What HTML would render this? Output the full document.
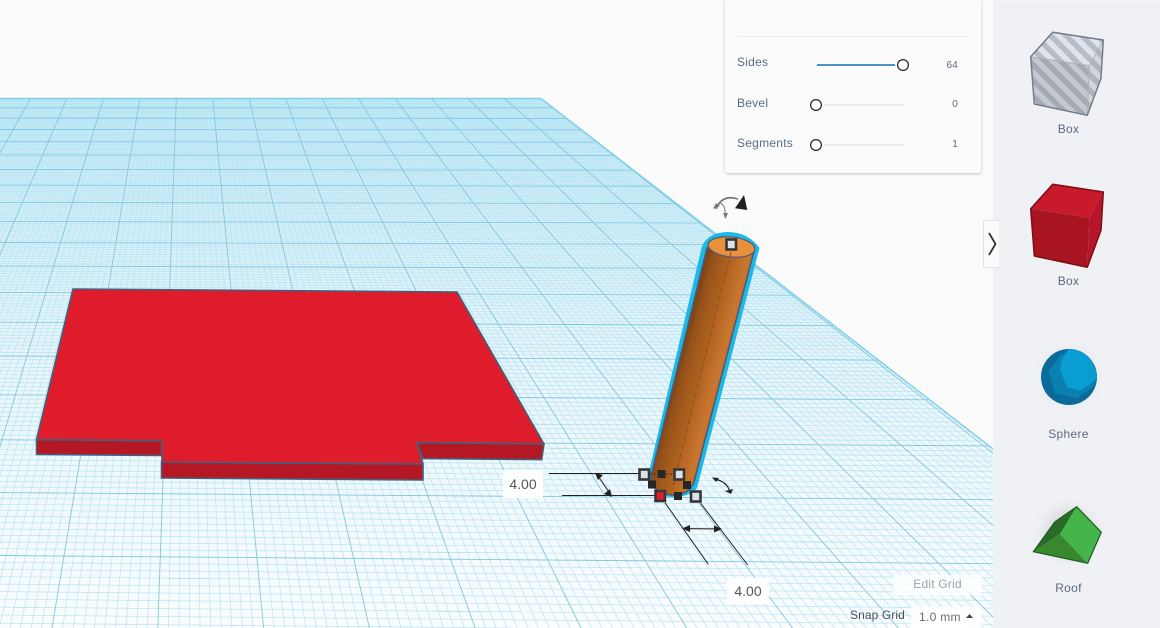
<!DOCTYPE html>
<html>
<head>
<meta charset="utf-8">
<title>Workplane</title>
<style>
html,body{margin:0;padding:0;width:1160px;height:628px;overflow:hidden;background:#fbfbfb;font-family:"Liberation Sans",sans-serif}
#stage{position:absolute;left:0;top:0;width:1160px;height:628px;overflow:hidden}
svg{position:absolute;left:0;top:0}
.side{position:absolute;left:993px;top:0;width:167px;height:628px;background:#f0f1f4}
.sline{position:absolute;left:5px;right:0;top:6px;height:1px;background:#e4e6ea}
.lbl{position:absolute;left:993px;width:151px;text-align:center;font-size:12px;letter-spacing:.3px;color:#5a6a80;line-height:14px}
.panel{position:absolute;left:725px;top:0;width:256px;height:173px;background:#fbfbfb;border-radius:0 0 3px 3px;box-shadow:0 1px 3px rgba(0,0,0,.22)}
.divd{position:absolute;left:737px;top:36px;width:232px;height:1px;background:#ececee}
.pt{position:absolute;left:737px;font-size:12px;letter-spacing:.25px;color:#5b6b7d;line-height:14px}
.pv{position:absolute;right:202px;font-size:10px;letter-spacing:.2px;color:#667;line-height:12px}
.dim{position:absolute;background:rgba(255,255,255,.95);color:#555;font-size:14px;text-align:center}
.hdl{position:absolute;left:983px;top:220px;width:15px;height:46px;background:#fbfbfb;border:1px solid #e2e2e4;border-right:none}
.eg{position:absolute;left:893px;top:575px;width:89px;height:20px;background:rgba(255,255,255,.82);border-radius:2px;color:#9aa3ad;font-size:12px;letter-spacing:.2px;text-align:center;line-height:19px}
.sg{position:absolute;left:850px;top:608px;font-size:12px;letter-spacing:.1px;color:#4a4f57;line-height:14px}
.dd{position:absolute;left:911px;top:607px;width:71px;height:21px;background:rgba(255,255,255,.9);color:#666c74;font-size:12px;letter-spacing:.3px;line-height:21px;text-indent:8px;overflow:hidden}
</style>
</head>
<body>
<div id="stage">
<svg width="1160" height="628" viewBox="0 0 1160 628">
  <defs>
    <clipPath id="plane"><polygon points="0,98 541,98 993,449 993,628 0,628"/></clipPath>
    <linearGradient id="cyl" gradientUnits="userSpaceOnUse" x1="651" y1="470" x2="697" y2="482">
      <stop offset="0" stop-color="#7f4314"/><stop offset=".14" stop-color="#96521a"/>
      <stop offset=".5" stop-color="#b0621f"/><stop offset=".85" stop-color="#c9772f"/><stop offset="1" stop-color="#bd6c28"/>
    </linearGradient>
    <linearGradient id="fog" gradientUnits="userSpaceOnUse" x1="0" y1="98" x2="0" y2="628">
      <stop offset="0" stop-color="#cbeaf6"/><stop offset=".45" stop-color="#e6f4f9"/><stop offset="1" stop-color="#fafcfd"/>
    </linearGradient>
    <clipPath id="sph"><circle cx="1069" cy="377" r="28"/></clipPath>
  </defs>
  <rect x="0" y="98" width="993" height="530" fill="url(#fog)" clip-path="url(#plane)"/>
  <g clip-path="url(#plane)" fill="none">
    <path id="gminor" stroke="#b6e5f4" stroke-width=".7"/>
    <path id="gmajor" stroke="#7fc8e1" stroke-width=".9"/>
  </g>
  <path d="M0,98.5 L541,98.5 L993,449" fill="none" stroke="#82cfe8" stroke-width="1.5"/>

  <!-- red plate -->
  <polygon points="36.5,439.6 162,440.7 162,455.5 36.5,454.4" fill="#b51824" stroke="#44607a" stroke-width="1.6"/>
  <polygon points="161.5,462 423,464 423,480 161.5,478" fill="#b51824" stroke="#44607a" stroke-width="1.6"/>
  <polygon points="416.7,442.4 544,444 541.7,459.6 423,458.6" fill="#b51824" stroke="#44607a" stroke-width="1.6"/>
  <polygon points="73,289 457,292 544,444 416.7,442.4 423,464 161.9,462 161.9,440.7 36.5,439.6" fill="#de1c2c" stroke="#44607a" stroke-width="1.6" stroke-linejoin="round"/>

  <!-- dimension lines -->
  <g stroke="#222" stroke-width="1" fill="none">
    <path d="M549,473.5H640M562,495.5H655"/>
    <path d="M665,502.7L708.3,564.3M700.7,503.3L747.7,565"/>
    <path d="M597,474.5L611,495M684,528.5L721,529" stroke-width="1.2" stroke="#444"/>
  </g>
  <g fill="#222">
    <polygon points="595,473 603,475 598,480"/><polygon points="612,497 604,494 610,489"/>
    <polygon points="682,528.5 690,525 690,532"/><polygon points="722,529 714,525.5 714,532.5"/>
  </g>
  <path d="M714,479 Q727,481 730,492" fill="none" stroke="#222" stroke-width="1.2"/>
  <polygon points="712,477.5 719,478 716,482" fill="#222"/>
  <polygon points="725,491 733,489 731,494" fill="#222"/>

  <!-- cylinder -->
  <path d="M701.5,248 Q706,233 727,232 Q748,232 759.5,248 L697,488 Q690,497 672,497 Q655,497 648,476 Z" fill="#1bb8e8"/>
  <path d="M707,248 L652,472 Q649,486 660,492 Q674,498 686,492 Q692,488 694,482 L754,251 Z" fill="url(#cyl)" stroke="#4d5a78" stroke-width="1.6"/>
  <ellipse cx="731.5" cy="247" rx="23.5" ry="10" transform="rotate(6 731.5 247)" fill="#e8903c" stroke="#4d5a78" stroke-width="1.2"/>
  <path d="M731,252 L672,490" fill="none" stroke="#8a5020" stroke-width="1" stroke-dasharray="6 3"/>
  <path d="M646,474H678" stroke="#5a1a1a" stroke-width="1" stroke-dasharray="2 2"/>

  <!-- handles -->
  <g stroke="#363636" stroke-width="2.6" fill="#dde0e6">
    <rect x="726.5" y="239.5" width="9.5" height="10"/>
    <rect x="639.5" y="469.5" width="9.5" height="10"/>
    <rect x="674.5" y="469.5" width="9.5" height="10"/>
    <rect x="691" y="491.5" width="9.5" height="10"/>
    <rect x="655.5" y="491" width="9.5" height="10" fill="#e11c2c"/>
  </g>
  <g fill="#262626">
    <rect x="657.5" y="470" width="8" height="8"/>
    <rect x="648" y="480.5" width="8" height="8"/>
    <rect x="683" y="481" width="8" height="8"/>
    <rect x="674" y="492" width="8" height="8"/>
  </g>

  <!-- rotate icon -->
  <path d="M716,209 Q722,194 738,199" fill="none" stroke="#6f7378" stroke-width="1.6"/>
  <path d="M720,203 Q726,205 725,217" fill="none" stroke="#8a8e93" stroke-width="1.2"/>
  <polygon points="713,209 716,203 720,206" fill="#777"/>
  <polygon points="723,213 728,213 725.5,219" fill="#777"/>
  <polygon points="744,195 735,208.3 747.3,210" fill="#222"/>
</svg>

<div class="dim" style="left:503px;top:470px;width:40px;height:28px;line-height:28px">4.00</div>
<div class="dim" style="left:727px;top:578px;width:42px;height:26px;line-height:26px">4.00</div>

<div class="panel"></div>
<div class="divd"></div>
<div class="pt" style="top:55px">Sides</div>
<div class="pt" style="top:96px">Bevel</div>
<div class="pt" style="top:136px">Segments</div>
<div class="pv" style="top:60px">64</div>
<div class="pv" style="top:99px">0</div>
<div class="pv" style="top:139px">1</div>

<div class="side"><div class="sline"></div></div>
<div class="hdl"></div>

<svg width="1160" height="628" viewBox="0 0 1160 628" style="pointer-events:none">
  <defs>
    <pattern id="st" width="11" height="11" patternUnits="userSpaceOnUse" patternTransform="rotate(-45)">
      <rect width="5.5" height="11" fill="#6f7784" fill-opacity=".36"/>
    </pattern>
    <radialGradient id="glow"><stop offset=".55" stop-color="#c9ccd2" stop-opacity=".55"/><stop offset="1" stop-color="#f0f1f4" stop-opacity="0"/></radialGradient>
  </defs>

  <!-- sliders -->
  <path d="M817,65H895" stroke="#4a94cc" stroke-width="2"/>
  <path d="M824,105H904M824,145H904" stroke="#ececee" stroke-width="2"/>
  <g fill="#fff" stroke="#222" stroke-width="1.2">
    <circle cx="903" cy="65" r="5.4"/><circle cx="816" cy="105" r="5.4"/><circle cx="816" cy="145" r="5.4"/>
  </g>
  <path d="M989,233L995.5,244L989,255" fill="none" stroke="#333" stroke-width="1.8"/>

  <!-- glows -->
  <circle cx="1069" cy="75" r="37" fill="url(#glow)" opacity=".35"/>
  <circle cx="1069" cy="227" r="37" fill="url(#glow)" opacity=".35"/>
  <circle cx="1069" cy="377" r="38" fill="url(#glow)" opacity=".6"/>
  <circle cx="1069" cy="533" r="38" fill="url(#glow)" opacity=".8"/>

  <!-- gray box -->
  <polygon points="1030.7,56.7 1089.3,65.7 1087.3,115.3 1034.3,104" fill="#c4c8d0"/>
  <polygon points="1030.7,56.7 1052.7,32.3 1103.3,40 1089.3,65.7" fill="#dfe4ec"/>
  <polygon points="1089.3,65.7 1103.3,40 1101,78.3 1087.3,115.3" fill="#d2d6dc"/>
  <polygon points="1030.7,56.7 1052.7,32.3 1103.3,40 1101,78.3 1087.3,115.3 1034.3,104" fill="url(#st)"/>
  <path d="M1030.7,56.7L1089.3,65.7L1103.3,40M1089.3,65.7L1087.3,115.3" fill="none" stroke="#aab0ba" stroke-width="1"/>
  <polygon points="1030.7,56.7 1052.7,32.3 1103.3,40 1101,78.3 1087.3,115.3 1034.3,104" fill="none" stroke="#737c88" stroke-width="1.5" stroke-linejoin="round"/>

  <!-- red box -->
  <polygon points="1030.7,208.7 1089.3,217.7 1087.3,267.3 1034.3,256" fill="#a8141f"/>
  <polygon points="1030.7,208.7 1052.7,184.3 1103.3,192 1089.3,217.7" fill="#c91a2c"/>
  <polygon points="1089.3,217.7 1103.3,192 1101,230.3 1087.3,267.3" fill="#b5162a"/>
  <polygon points="1030.7,208.7 1052.7,184.3 1103.3,192 1101,230.3 1087.3,267.3 1034.3,256" fill="none" stroke="#7c0f18" stroke-width="1.5" stroke-linejoin="round"/>

  <!-- sphere -->
  <circle cx="1069" cy="377" r="28" fill="#0a6b9a"/>
  <g clip-path="url(#sph)">
    <polygon points="1060,355 1048.3,371.7 1055,393.3 1076.7,398.3 1093.3,386.7 1098,376.7 1082,347" fill="#0a7fb0"/>
    <polygon points="1061.7,360 1060,370 1067.3,387.3 1080,390.7 1093.3,381.7 1098,376.7 1090,356 1070,347" fill="#0a9dd1"/>
  </g>

  <!-- roof -->
  <polygon points="1033.3,551.7 1055,521.7 1076.7,506.7 1060,534" fill="#2a6b28"/>
  <polygon points="1033.3,551.7 1060,534 1087.7,563.3" fill="#37882f"/>
  <polygon points="1076.7,506.7 1101.3,532.3 1087.7,563.3 1060,534" fill="#43b54a"/>
  <polygon points="1033.3,551.7 1055,521.7 1076.7,506.7 1101.3,532.3 1087.7,563.3" fill="none" stroke="#1f5a1f" stroke-width="1.2" stroke-linejoin="round"/>
</svg>

<div class="lbl" style="top:122px">Box</div>
<div class="lbl" style="top:274px">Box</div>
<div class="lbl" style="top:427px">Sphere</div>
<div class="lbl" style="top:581px">Roof</div>

<div class="eg">Edit Grid</div>
<div class="sg">Snap Grid</div>
<div class="dd">1.0 mm</div>
<svg width="1160" height="628" viewBox="0 0 1160 628"><polygon points="966,618 969.5,614 973,618" fill="#444"/></svg>
</div>
<script>
(function(){
  var minor="",major="",i,m;
  function f(n){return n.toFixed(1)}
  for(i=-80;i<=100;i++){
    var x0=176.3+3.64*i;
    var x1=186+(x0-186)*(628+180)/278;
    var s="M"+f(x0)+",98L"+f(x1)+",628";
    if(((i%10)+10)%10===0){major+=s}else{minor+=s}
  }
  for(m=0;m<=200;m++){
    var d=3.731e-3-0.1307e-3*(m/10);
    if(d<=0.0008)break;
    var y=-170+1/d;
    if(y>=628)break;
    var sl=(y-98)*1.8e-5;
    var xe=993,ye=y+993*sl;
    if(ye>628){ye=628;xe=(628-y)/sl}
    var r="M0,"+f(y)+"L"+f(xe)+","+f(ye);
    if(m%10===0){major+=r}else{minor+=r}
  }
  document.getElementById("gminor").setAttribute("d",minor);
  document.getElementById("gmajor").setAttribute("d",major);
})();
</script>
</body>
</html>
